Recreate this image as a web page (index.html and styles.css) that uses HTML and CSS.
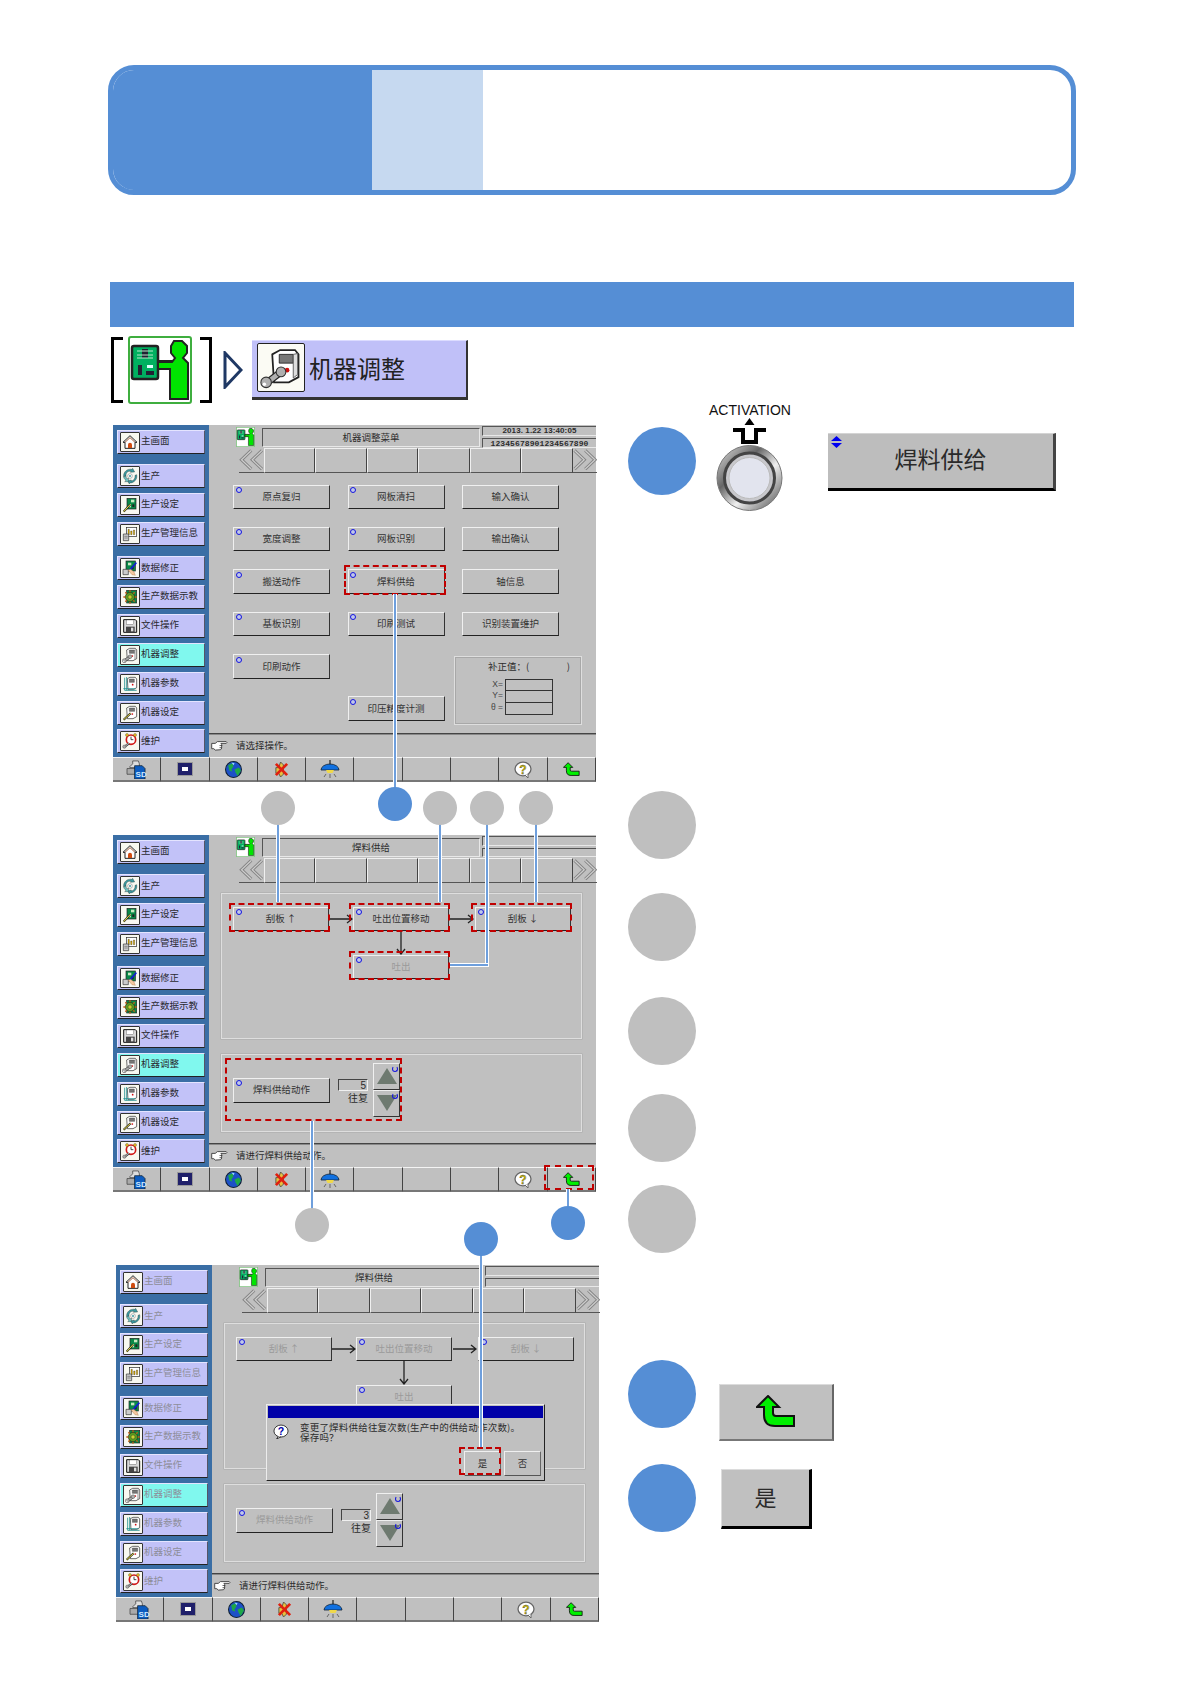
FILE: index.html
```html
<!DOCTYPE html>
<html lang="zh-CN">
<head>
<meta charset="utf-8">
<title>焊料供给</title>
<link rel="stylesheet" href="styles.css">
</head>
<body>
<svg class="defs" width="0" height="0" aria-hidden="true">
  <defs>
    <symbol id="i-person" viewBox="0 0 64 68">
      <rect x="1" y="1" width="62" height="66" rx="2" fill="#fff" stroke="#3fae3f" stroke-width="2"/>
      <rect x="4" y="10" width="26" height="33" rx="2" fill="#00b060" stroke="#222" stroke-width="2.500"/>
      <rect x="14" y="13" width="6" height="9" fill="#223"/><path d="M9 15h16M9 19h16M9 22h16" stroke="#b8e8c8" stroke-width="1"/>
      <rect x="10" y="29" width="4" height="10" fill="#223"/><rect x="19" y="29" width="6" height="3" fill="#dff"/><rect x="18" y="35" width="8" height="4" fill="#223"/>
      <path d="M30 25h17v7H30z" fill="#00e400" stroke="#222" stroke-width="2"/>
      <path d="M46 5h8l5 5v7l-4 5 5 5v36H42V33H30v-7h14l3-4-4-5v-7z" fill="#00e400" stroke="#222" stroke-width="2"/>
    </symbol>
    <symbol id="i-machine" viewBox="0 0 48 48">
      <path d="M14 9l9-5h17l4 5v26l-11 6H16z" fill="#fff" stroke="#222" stroke-width="2"/>
      <path d="M22 9h16v10H22z" fill="#777" stroke="#222"/>
      <path d="M38 9l5-1v24l-5 4z" fill="#ddd" stroke="#555"/>
      <circle cx="31" cy="27" r="2.600" fill="#d01010"/>
      <path d="M6 43l18-14" stroke="#222" stroke-width="8"/>
      <path d="M6 43l18-14" stroke="#b0b0b0" stroke-width="5.500"/>
      <circle cx="7" cy="41" r="6" fill="#b0b0b0" stroke="#333" stroke-width="1.200"/>
      <circle cx="24" cy="29" r="5.500" fill="#b0b0b0" stroke="#333" stroke-width="1.200"/>
      <circle cx="5" cy="43" r="2" fill="#fff"/>
    </symbol>
    <symbol id="i-home" viewBox="0 0 48 48">
      <path d="M24 5L45 25h-6v18H9V25H3z" fill="#fff" stroke="#222" stroke-width="3"/>
      <path d="M9 25L24 11l15 14" fill="none" stroke="#a06040" stroke-width="3"/>
      <path d="M18 42V32a6 6 0 0 1 12 0v10z" fill="#d04c10"/>
    </symbol>
    <symbol id="i-prod" viewBox="0 0 48 48">
      <path d="M5 26C3 12 16 1 30 4l2-3 6 11-13 1 2-3C18 8 11 14 12 24z" fill="#3a9aa0" stroke="#222"/>
      <path d="M44 20c3 13-7 25-21 25l-1 3-6-10 12-2-1 3c8 0 13-7 12-17z" fill="#3a9aa0" stroke="#222"/>
      <path d="M12 37C7 33 5 30 5 26l7-2c0 4 2 7 4 9l3-3 1 11H8z" fill="#6cc0c0" stroke="#222"/>
      <circle cx="24" cy="24" r="7" fill="#fff" stroke="#333"/>
      <circle cx="24" cy="24" r="3" fill="#3a9aa0"/>
    </symbol>
    <symbol id="i-setup" viewBox="0 0 48 48">
      <rect x="15" y="4" width="27" height="32" fill="#0a8a48" stroke="#222" stroke-width="2"/>
      <rect x="27" y="8" width="10" height="8" fill="#c8e8c0"/><rect x="21" y="21" width="6" height="10" fill="#c8e8c0"/><rect x="31" y="22" width="6" height="8" fill="#222"/>
      <path d="M5 44l20-22" stroke="#222" stroke-width="6"/>
      <path d="M5 44l20-22" stroke="#f0e040" stroke-width="3"/>
    </symbol>
    <symbol id="i-info" viewBox="0 0 48 48">
      <rect x="13" y="4" width="31" height="27" fill="#fff" stroke="#222" stroke-width="2"/>
      <path d="M18 26V10h4v16zM26 26V15h4v11zM34 26V12h4v14z" fill="#e0b000" stroke="#222"/>
      <path d="M4 24h16v20H4z" fill="#ccc" stroke="#333" stroke-width="2"/>
      <path d="M7 31h10M7 36h10" stroke="#666" stroke-width="2"/>
    </symbol>
    <symbol id="i-edit" viewBox="0 0 48 48">
      <rect x="12" y="3" width="28" height="30" fill="#0a8a48" stroke="#222" stroke-width="2"/>
      <rect x="18" y="8" width="10" height="8" fill="#c8e8c0"/><rect x="28" y="20" width="7" height="8" fill="#222"/>
      <path d="M3 28h16v16H3z" fill="#ccc" stroke="#333" stroke-width="2"/>
      <path d="M22 32L43 8" stroke="#1020d0" stroke-width="5"/>
      <path d="M18 30l12 14 10 2-4-10-10-8z" fill="#f4c8a0" stroke="#a06030"/>
    </symbol>
    <symbol id="i-teach" viewBox="0 0 48 48">
      <rect x="14" y="4" width="30" height="38" fill="#0a8a48" stroke="#222" stroke-width="2"/>
      <circle cx="24" cy="24" r="14" fill="#5a9a20" stroke="#222" stroke-width="2"/>
      <circle cx="24" cy="24" r="6" fill="#c8d030" stroke="#222"/>
      <path d="M24 4v6M24 38v6M4 24h6M38 24h6M10 10l4 4M34 34l4 4M10 38l4-4M34 14l4-4" stroke="#c06010" stroke-width="4"/>
    </symbol>
    <symbol id="i-floppy" viewBox="0 0 48 48">
      <path d="M5 5h35l4 4v34H5z" fill="#d8d8d8" stroke="#111" stroke-width="3"/>
      <rect x="13" y="6" width="22" height="13" fill="#fff" stroke="#333"/>
      <rect x="12" y="26" width="26" height="17" fill="#444"/>
      <rect x="27" y="29" width="7" height="11" fill="#ddd"/>
    </symbol>
    <symbol id="i-param" viewBox="0 0 48 48">
      <path d="M16 8l8-4h16l4 5v26l-10 6H18z" fill="#fff" stroke="#222" stroke-width="2"/>
      <path d="M22 9h15v10H22z" fill="#777" stroke="#222"/>
      <circle cx="32" cy="26" r="2.600" fill="#d01010"/>
      <path d="M8 5v38h36M4 38h36M14 3v40" fill="none" stroke="#209090" stroke-width="2.500"/>
    </symbol>
    <symbol id="i-mset" viewBox="0 0 48 48">
      <path d="M14 9l9-5h17l4 5v26l-11 6H16z" fill="#fff" stroke="#222" stroke-width="2"/>
      <path d="M22 9h16v10H22z" fill="#777" stroke="#222"/>
      <circle cx="31" cy="27" r="2.600" fill="#d01010"/>
      <path d="M5 44l21-19" stroke="#222" stroke-width="6"/>
      <path d="M5 44l21-19" stroke="#f0e040" stroke-width="3"/>
    </symbol>
    <symbol id="i-maint" viewBox="0 0 48 48">
      <circle cx="27" cy="20" r="14" fill="#fff" stroke="#d01818" stroke-width="5"/>
      <path d="M27 11v9h7" fill="none" stroke="#222" stroke-width="2.500"/>
      <circle cx="15" cy="6" r="4.500" fill="#f0c020" stroke="#222"/><circle cx="39" cy="6" r="4.500" fill="#f0c020" stroke="#222"/>
      <path d="M5 43l16-12" stroke="#222" stroke-width="6"/>
      <path d="M5 43l16-12" stroke="#aaa" stroke-width="3.500"/>
      <circle cx="7" cy="41" r="5" fill="#aaa" stroke="#333"/>
    </symbol>
    <symbol id="t-sd" viewBox="0 0 22 20">
      <path d="M4 7l3-3V1h6l1 3v4H4z" fill="#ddd" stroke="#444" stroke-width=".8"/>
      <path d="M1 9h12v6H1z" fill="#aaa" stroke="#444" stroke-width=".8"/>
      <path d="M9 6h8l3 3v11H9z" fill="#0c5cc0" stroke="#123" stroke-width=".8"/>
      <text x="10" y="18" font-family="Liberation Sans, sans-serif" font-size="8.500" font-weight="700" fill="#cfe8ff">SD</text>
    </symbol>
    <symbol id="t-mon" viewBox="0 0 16 14">
      <rect x=".5" y=".5" width="15" height="13" fill="#20206a" stroke="#999"/>
      <rect x="5" y="5" width="6" height="4" fill="#fff"/>
    </symbol>
    <symbol id="t-globe" viewBox="0 0 16 16">
      <circle cx="8" cy="8" r="7.500" fill="#1c50c8" stroke="#123"/>
      <path d="M3 4l4-2 1 3-2 3 1 2-3-1zM9 8l4-2 2 3-3 5-2-3z" fill="#1ea848"/>
      <path d="M6 1.500l3 .5-1 2z" fill="#9cd8ff"/>
    </symbol>
    <symbol id="t-x" viewBox="0 0 16 18">
      <path d="M7 1l3 3v10l-3 3-2-4H2V7h3z" fill="#e8c040" stroke="#554"/>
      <path d="M2 3l12 12M14 3L2 15" stroke="#e02010" stroke-width="3"/>
    </symbol>
    <symbol id="t-lamp" viewBox="0 0 20 18">
      <path d="M10 0v5" stroke="#222" stroke-width="1.200"/>
      <path d="M1 10a9 6 0 0 1 18 0z" fill="#1070e0" stroke="#123" stroke-width=".8"/>
      <path d="M6 10h8l-1.500 3h-5z" fill="#f0d848"/>
      <path d="M6 14l-2 3M10 14v4M14 14l2 3" stroke="#666"/>
    </symbol>
    <symbol id="t-help" viewBox="0 0 18 17">
      <ellipse cx="9" cy="8" rx="8" ry="6.800" fill="#fff" stroke="#666" stroke-width="1.300"/>
      <path d="M11 14l3 3v-4" fill="#fff" stroke="#666"/>
      <text x="9" y="12.500" text-anchor="middle" font-family="Liberation Sans, sans-serif" font-size="12" font-weight="700" fill="#c8b800" stroke="#444" stroke-width=".3">?</text>
    </symbol>
    <symbol id="t-qblue" viewBox="0 0 18 17">
      <ellipse cx="9" cy="8" rx="8" ry="6.800" fill="#fff" stroke="#222"/>
      <path d="M6 14l-2 3 5-2.500" fill="#fff" stroke="#222"/>
      <text x="9" y="12.500" text-anchor="middle" font-family="Liberation Sans, sans-serif" font-size="12" font-weight="700" fill="#0000a8">?</text>
    </symbol>
    <symbol id="t-back" viewBox="0 0 40 34">
      <path d="M12 1l11 11h-6v6q0 3 3 3h18v10H19q-11 0-11-11v-8H1z" fill="#00f000" stroke="#111" stroke-width="2"/>
    </symbol>
    <symbol id="i-hand" viewBox="0 0 24 14">
      <path d="M1 4h5l3-2.500h12.500q2 1 0 2.500H14l1 1.500v5q0 2-2 2.500l-7 .5-2-2H1z" fill="#fff" stroke="#333" stroke-width="1.200"/>
      <path d="M12 7h4M12 10h3" stroke="#333"/>
    </symbol>
    <symbol id="i-chevl" viewBox="0 0 24 22">
      <path d="M12 1.500L2 11l10 9.500M23 1.500L13 11l10 9.500" fill="none" stroke="#858585" stroke-width="3.200"/>
      <path d="M12 1.500L2 11l10 9.500M23 1.500L13 11l10 9.500" fill="none" stroke="#cdcdcd" stroke-width="1.200"/>
    </symbol>
    <symbol id="i-chevr" viewBox="0 0 24 22">
      <path d="M1 1.500L11 11 1 20.500M12 1.500L22 11 12 20.500" fill="none" stroke="#858585" stroke-width="3.200"/>
      <path d="M1 1.500L11 11 1 20.500M12 1.500L22 11 12 20.500" fill="none" stroke="#cdcdcd" stroke-width="1.200"/>
    </symbol>
    <symbol id="i-arr" viewBox="0 0 24 10">
      <path d="M0 5h23M18 1l5 4-5 4" fill="none" stroke="#222" stroke-width="1.300"/>
    </symbol>
    <symbol id="i-arrd" viewBox="0 0 10 24">
      <path d="M5 0v23M1 18l4 5 4-5" fill="none" stroke="#222" stroke-width="1.300"/>
    </symbol>
    <linearGradient id="metal" x1="0" y1="0" x2="1" y2="1">
      <stop offset="0" stop-color="#e4e4e4"/><stop offset=".35" stop-color="#666"/><stop offset=".6" stop-color="#f0f0f0"/><stop offset="1" stop-color="#444"/>
    </linearGradient>
  </defs>
</svg>

<div class="page">
  <header class="hero">
    <div class="hero-a"></div>
    <div class="hero-b"></div>
  </header>
  <div class="section-bar"></div>

  <div class="crumbs">
    <span class="brk brk-l"></span>
    <svg class="crumb-person"><use href="#i-person"/></svg>
    <span class="brk brk-r"></span>
    <svg class="crumb-tri" viewBox="0 0 20 38"><path d="M2 2l16 17L2 36z" fill="#fff" stroke="#1f3864" stroke-width="3"/></svg>
    <div class="crumb-btn">
      <span class="crumb-ico"><svg><use href="#i-machine"/></svg></span>
      <span>机器调整</span>
    </div>
  </div>

  <div class="work">
    <div class="screens">

      <section class="screen">
        <nav class="side">
          <div class="sb"><span class="ib"><svg><use href="#i-home"/></svg></span>主画面</div>
          <div class="sb g1"><span class="ib"><svg><use href="#i-prod"/></svg></span>生产</div>
          <div class="sb"><span class="ib"><svg><use href="#i-setup"/></svg></span>生产设定</div>
          <div class="sb"><span class="ib"><svg><use href="#i-info"/></svg></span>生产管理信息</div>
          <div class="sb g1"><span class="ib"><svg><use href="#i-edit"/></svg></span>数据修正</div>
          <div class="sb"><span class="ib"><svg><use href="#i-teach"/></svg></span>生产数据示教</div>
          <div class="sb"><span class="ib"><svg><use href="#i-floppy"/></svg></span>文件操作</div>
          <div class="sb on"><span class="ib"><svg><use href="#i-machine"/></svg></span>机器调整</div>
          <div class="sb"><span class="ib"><svg><use href="#i-param"/></svg></span>机器参数</div>
          <div class="sb"><span class="ib"><svg><use href="#i-mset"/></svg></span>机器设定</div>
          <div class="sb"><span class="ib"><svg><use href="#i-maint"/></svg></span>维护</div>
        </nav>
        <div class="main">
          <div class="head">
            <svg class="head-ico"><use href="#i-person"/></svg>
            <div class="head-title">机器调整菜单</div>
            <div class="head-info">
              <div class="info-box">2013. 1.22 13:40:05</div>
              <div class="info-box info-num">12345678901234567890</div>
            </div>
          </div>
          <div class="navrow">
            <span class="chev"><svg><use href="#i-chevl"/></svg></span>
            <span class="nc"></span><span class="nc"></span><span class="nc"></span><span class="nc"></span><span class="nc"></span><span class="nc"></span>
            <span class="chev"><svg><use href="#i-chevr"/></svg></span>
          </div>
          <div class="menu">
            <div class="btn mk">原点复归</div>
            <div class="btn mk">网板清扫</div>
            <div class="btn">输入确认</div>
            <div class="btn mk">宽度调整</div>
            <div class="btn mk">网板识别</div>
            <div class="btn">输出确认</div>
            <div class="btn mk">搬送动作</div>
            <div class="btn mk red">焊料供给</div>
            <div class="btn">轴信息</div>
            <div class="btn mk">基板识别</div>
            <div class="btn mk">印刷测试</div>
            <div class="btn">识别装置维护</div>
            <div class="btn mk">印刷动作</div>
            <div class="spacer"></div>
            <div class="offset">
              <div class="offset-title"><span>补正值：(</span><span>)</span></div>
              <div class="offset-grid">
                <span class="ol">X=</span><span class="ov"></span>
                <span class="ol">Y=</span><span class="ov"></span>
                <span class="ol">θ =</span><span class="ov"></span>
              </div>
            </div>
            <div class="spacer"></div>
            <div class="btn mk">印压精度计测</div>
          </div>
          <div class="status"><svg class="hand"><use href="#i-hand"/></svg>请选择操作。</div>
        </div>
        <div class="tools">
          <span class="tc"><svg class="t-sd"><use href="#t-sd"/></svg></span>
          <span class="tc"><svg class="t-mon"><use href="#t-mon"/></svg></span>
          <span class="tc"><svg class="t-globe"><use href="#t-globe"/></svg></span>
          <span class="tc"><svg class="t-x"><use href="#t-x"/></svg></span>
          <span class="tc"><svg class="t-lamp"><use href="#t-lamp"/></svg></span>
          <span class="tc"></span><span class="tc"></span><span class="tc"></span>
          <span class="tc"><svg class="t-help"><use href="#t-help"/></svg></span>
          <span class="tc"><svg class="t-back"><use href="#t-back"/></svg></span>
        </div>
      </section>

      <section class="screen screen-2">
        <nav class="side">
          <div class="sb"><span class="ib"><svg><use href="#i-home"/></svg></span>主画面</div>
          <div class="sb g1"><span class="ib"><svg><use href="#i-prod"/></svg></span>生产</div>
          <div class="sb"><span class="ib"><svg><use href="#i-setup"/></svg></span>生产设定</div>
          <div class="sb"><span class="ib"><svg><use href="#i-info"/></svg></span>生产管理信息</div>
          <div class="sb g1"><span class="ib"><svg><use href="#i-edit"/></svg></span>数据修正</div>
          <div class="sb"><span class="ib"><svg><use href="#i-teach"/></svg></span>生产数据示教</div>
          <div class="sb"><span class="ib"><svg><use href="#i-floppy"/></svg></span>文件操作</div>
          <div class="sb on"><span class="ib"><svg><use href="#i-machine"/></svg></span>机器调整</div>
          <div class="sb"><span class="ib"><svg><use href="#i-param"/></svg></span>机器参数</div>
          <div class="sb"><span class="ib"><svg><use href="#i-mset"/></svg></span>机器设定</div>
          <div class="sb"><span class="ib"><svg><use href="#i-maint"/></svg></span>维护</div>
        </nav>
        <div class="main">
          <div class="head">
            <svg class="head-ico"><use href="#i-person"/></svg>
            <div class="head-title">焊料供给</div>
            <div class="head-info">
              <div class="info-box"></div>
              <div class="info-box"></div>
            </div>
          </div>
          <div class="navrow">
            <span class="chev"><svg><use href="#i-chevl"/></svg></span>
            <span class="nc"></span><span class="nc"></span><span class="nc"></span><span class="nc"></span><span class="nc"></span><span class="nc"></span>
            <span class="chev"><svg><use href="#i-chevr"/></svg></span>
          </div>
          <div class="panels">
            <div class="panel flow">
              <div class="btn mk red">刮板 ↑</div>
              <svg class="arr"><use href="#i-arr"/></svg>
              <div class="btn mk red">吐出位置移动</div>
              <svg class="arr"><use href="#i-arr"/></svg>
              <div class="btn mk red">刮板 ↓</div>
              <svg class="arrd"><use href="#i-arrd"/></svg>
              <div class="btn mk red off pos-out">吐出</div>
            </div>
            <div class="panel cycle">
              <div class="btn mk">焊料供给动作</div>
              <div class="counter"><div class="cnt-box">5</div><div class="cnt-label">往复</div></div>
              <div class="updown">
                <div class="ud mkr"><span class="up"></span></div>
                <div class="ud mkr"><span class="dn"></span></div>
              </div>
              <span class="cycle-mark"></span>
            </div>
          </div>
          <div class="status"><svg class="hand"><use href="#i-hand"/></svg>请进行焊料供给动作。</div>
        </div>
        <div class="tools">
          <span class="tc"><svg class="t-sd"><use href="#t-sd"/></svg></span>
          <span class="tc"><svg class="t-mon"><use href="#t-mon"/></svg></span>
          <span class="tc"><svg class="t-globe"><use href="#t-globe"/></svg></span>
          <span class="tc"><svg class="t-x"><use href="#t-x"/></svg></span>
          <span class="tc"><svg class="t-lamp"><use href="#t-lamp"/></svg></span>
          <span class="tc"></span><span class="tc"></span><span class="tc"></span>
          <span class="tc"><svg class="t-help"><use href="#t-help"/></svg></span>
          <span class="tc tc-red"><svg class="t-back"><use href="#t-back"/></svg></span>
        </div>
      </section>

      <section class="screen screen-3">
        <nav class="side dim">
          <div class="sb"><span class="ib"><svg><use href="#i-home"/></svg></span>主画面</div>
          <div class="sb g1"><span class="ib"><svg><use href="#i-prod"/></svg></span>生产</div>
          <div class="sb"><span class="ib"><svg><use href="#i-setup"/></svg></span>生产设定</div>
          <div class="sb"><span class="ib"><svg><use href="#i-info"/></svg></span>生产管理信息</div>
          <div class="sb g1"><span class="ib"><svg><use href="#i-edit"/></svg></span>数据修正</div>
          <div class="sb"><span class="ib"><svg><use href="#i-teach"/></svg></span>生产数据示教</div>
          <div class="sb"><span class="ib"><svg><use href="#i-floppy"/></svg></span>文件操作</div>
          <div class="sb on"><span class="ib"><svg><use href="#i-machine"/></svg></span>机器调整</div>
          <div class="sb"><span class="ib"><svg><use href="#i-param"/></svg></span>机器参数</div>
          <div class="sb"><span class="ib"><svg><use href="#i-mset"/></svg></span>机器设定</div>
          <div class="sb"><span class="ib"><svg><use href="#i-maint"/></svg></span>维护</div>
        </nav>
        <div class="main">
          <div class="head">
            <svg class="head-ico"><use href="#i-person"/></svg>
            <div class="head-title">焊料供给</div>
            <div class="head-info">
              <div class="info-box"></div>
              <div class="info-box"></div>
            </div>
          </div>
          <div class="navrow">
            <span class="chev"><svg><use href="#i-chevl"/></svg></span>
            <span class="nc"></span><span class="nc"></span><span class="nc"></span><span class="nc"></span><span class="nc"></span><span class="nc"></span>
            <span class="chev"><svg><use href="#i-chevr"/></svg></span>
          </div>
          <div class="panels">
            <div class="panel flow">
              <div class="btn mk off">刮板 ↑</div>
              <svg class="arr"><use href="#i-arr"/></svg>
              <div class="btn mk off">吐出位置移动</div>
              <svg class="arr"><use href="#i-arr"/></svg>
              <div class="btn mk off">刮板 ↓</div>
              <svg class="arrd"><use href="#i-arrd"/></svg>
              <div class="btn mk off pos-out">吐出</div>
            </div>
            <div class="panel cycle">
              <div class="btn mk off">焊料供给动作</div>
              <div class="counter"><div class="cnt-box">3</div><div class="cnt-label">往复</div></div>
              <div class="updown">
                <div class="ud mkr"><span class="up"></span></div>
                <div class="ud mkr"><span class="dn"></span></div>
              </div>
            </div>
          </div>
          <div class="dialog">
            <div class="dlg-bar"></div>
            <div class="dlg-body">
              <svg class="dlg-q"><use href="#t-qblue"/></svg>
              <p class="dlg-text">变更了焊料供给往复次数(生产中的供给动作次数)。<br>保存吗？</p>
            </div>
            <div class="dlg-btns">
              <div class="btn dlg-yes">是</div>
              <div class="btn">否</div>
            </div>
          </div>
          <div class="status"><svg class="hand"><use href="#i-hand"/></svg>请进行焊料供给动作。</div>
        </div>
        <div class="tools">
          <span class="tc"><svg class="t-sd"><use href="#t-sd"/></svg></span>
          <span class="tc"><svg class="t-mon"><use href="#t-mon"/></svg></span>
          <span class="tc"><svg class="t-globe"><use href="#t-globe"/></svg></span>
          <span class="tc"><svg class="t-x"><use href="#t-x"/></svg></span>
          <span class="tc"><svg class="t-lamp"><use href="#t-lamp"/></svg></span>
          <span class="tc"></span><span class="tc"></span><span class="tc"></span>
          <span class="tc"><svg class="t-help"><use href="#t-help"/></svg></span>
          <span class="tc"><svg class="t-back"><use href="#t-back"/></svg></span>
        </div>
      </section>
    </div>

    <div class="steps">
      <div class="step">
        <span class="big blue"></span>
        <div class="switch">
          <div class="switch-label">ACTIVATION</div>
          <svg class="switch-svg" viewBox="0 0 81 97">
            <path d="M35.500 9l5-7 5 7z" fill="#000"/>
            <path d="M24 14h10v12h13V14h10" fill="none" stroke="#000" stroke-width="4"/>
            <circle cx="40.500" cy="62" r="32.500" fill="url(#metal)" stroke="#777"/>
            <circle cx="40.500" cy="62" r="25" fill="#c8c8cc" stroke="#444" stroke-width="3"/>
            <circle cx="40.500" cy="62" r="20.500" fill="#e2e4ee" stroke="#bbb"/>
          </svg>
        </div>
        <div class="big-btn"><svg class="big-mark" viewBox="0 0 13 12"><path d="M6.500 0L12 5H1zM1 7h11L6.500 12z" fill="#0000f0"/></svg>焊料供给</div>
      </div>
      <div class="step st2"><span class="big gray"></span></div>
      <div class="step st3"><span class="big gray"></span></div>
      <div class="step st4"><span class="big gray"></span></div>
      <div class="step st5"><span class="big gray"></span></div>
      <div class="step st6"><span class="big gray"></span></div>
      <div class="step st7">
        <span class="big blue"></span>
        <div class="ret-btn"><svg><use href="#t-back"/></svg></div>
      </div>
      <div class="step st8">
        <span class="big blue"></span>
        <div class="yes-btn">是</div>
      </div>
    </div>
  </div>

  <div class="notes">
    <span class="lead l-blue1"></span>
    <span class="lead l-g1"></span>
    <span class="lead l-g2"></span>
    <span class="lead l-g3"></span>
    <span class="lead-h l-g3h"></span>
    <span class="lead l-g4"></span>
    <span class="lead l-gb"></span>
    <span class="lead l-ret"></span>
    <span class="lead l-yes"></span>
    <span class="dot blue d-b1"></span>
    <span class="dot gray d-g1"></span>
    <span class="dot gray d-g2"></span>
    <span class="dot gray d-g3"></span>
    <span class="dot gray d-g4"></span>
    <span class="dot gray d-gb"></span>
    <span class="dot blue d-ret"></span>
    <span class="dot blue d-yes"></span>
  </div>
</div>
</body>
</html>
```

FILE: styles.css
```css
* { box-sizing: border-box; }
html, body { margin: 0; padding: 0; background: #fff; }
body { font-family: "Noto Sans CJK SC", "Liberation Sans", sans-serif; color: #2c2c2c; }
.defs { position: absolute; }
svg { display: block; }

.page { position: relative; width: 1190px; height: 1684px; padding-top: 65px; overflow: hidden; }

/* Header card */
.hero { display: flex; width: 968px; height: 130px; margin-left: 108px; border: 5px solid #558ed5; border-radius: 26px; overflow: hidden; background: #fff; }
.hero-a { width: 259px; background: #558ed5; }
.hero-b { width: 111px; background: #c6d9f0; }
.section-bar { width: 964px; height: 45px; margin: 87px 0 0 110px; background: #558ed5; }

/* Breadcrumb */
.crumbs { display: flex; align-items: center; height: 68px; margin: 9px 0 0 111px; }
.brk { display: block; width: 12px; height: 66px; border: 3px solid #000; }
.brk-l { border-right: 0; }
.brk-r { border-left: 0; margin-left: 8px; }
.crumb-person { width: 64px; height: 68px; margin-left: 5px; }
.crumb-tri { width: 20px; height: 38px; margin-left: 11px; }
.crumb-btn { display: flex; align-items: center; gap: 4px; width: 216px; height: 60px; margin-left: 9px; padding: 0 0 3px 5px; background: #c0c0f8; border-top: 1px solid #dcdcff; border-right: 2px solid #333; border-bottom: 3px solid #333; font-size: 24px; line-height: 1; color: #222; }
.crumb-ico { display: block; width: 48px; height: 49px; padding: 2px; background: #fbfbf4; border: 1.5px solid #222; border-radius: 2px; }
.crumb-ico svg { width: 100%; height: 100%; }

/* Work area */
.work { display: flex; margin-top: 21px; padding-left: 113px; }
.screens { width: 486px; }

/* Machine screen */
.screen { display: grid; grid-template-columns: 96px 387px; grid-template-rows: 332px 25px; width: 483px; height: 357px; background: #c0c0c0; font-size: 9.5px; line-height: 1; }
.screen-2 { margin-top: 53px; }
.screen-3 { margin: 73px 0 0 3px; }

.side { display: flex; flex-direction: column; gap: 4.85px; padding: 5px 4.5px 0 4px; background: #3a6ea5; }
.sb { display: flex; align-items: center; gap: 1px; height: 24px; padding: 0 0 2px 2px; background: #c2c2f8; border-top: 1px solid #e4e4ff; border-left: 1px solid #e4e4ff; border-bottom: 1px solid #222; border-right: 1px solid #556; white-space: nowrap; color: #2a2a30; }
.sb.g1 { margin-top: 5.5px; }
.sb.on { background: #80f8ee; }
.ib { display: block; flex: none; width: 20px; height: 20px; margin-bottom: -2px; padding: 1px; background: #f8f8f0; border: 1px solid #333; border-radius: 1px; }
.ib svg { width: 100%; height: 100%; }
.dim .sb { color: #8d8d98; }

.main { position: relative; display: flex; flex-direction: column; min-width: 0; }
.head { display: flex; height: 23px; }
.head-ico { flex: none; width: 19px; height: 20px; margin: 2px 0 0 27px; }
.head-title { display: flex; align-items: center; justify-content: center; width: 218px; height: 19px; margin: 3px 0 0 7px; border-top: 1px solid #555; border-left: 1px solid #555; border-bottom: 1px solid #e8e8e8; border-right: 1px solid #e8e8e8; }
.head-info { display: flex; flex-direction: column; gap: 2px; width: 114px; margin-left: 2px; padding-top: 1px; }
.info-box { height: 9.500px; border-top: 1px solid #555; border-left: 1px solid #555; border-bottom: 1px solid #e8e8e8; font: 700 8px/8.500px "Liberation Sans", sans-serif; letter-spacing: .1px; text-align: center; }
.info-num { height: 10px; font: 700 8px/9px "Liberation Mono", monospace; }

.navrow { display: flex; height: 24.5px; margin-left: 30px; }
.chev { display: block; flex: none; width: 24.5px; padding: 1px 0; border-bottom: 1px solid #555; }
.chev svg { width: 100%; height: 100%; }
.nc { display: block; flex: none; width: 51.5px; border-top: 1px solid #f0f0f0; border-left: 1px solid #f0f0f0; border-right: 1px solid #444; border-bottom: 1px solid #555; }

.btn { position: relative; display: flex; align-items: center; justify-content: center; background: #c0c0c0; border-top: 1px solid #f0f0f0; border-left: 1px solid #f0f0f0; border-right: 1px solid #333; border-bottom: 1px solid #222; white-space: nowrap; color: #333; }
.btn.off { color: #9a9a9a; }
.mk::before, .mkr::before { content: ""; position: absolute; top: 1.500px; left: 1.500px; width: 4px; height: 4px; border: 1.200px solid #1414e0; border-radius: 50%; background: #c0c8e8; }
.mkr::before { left: auto; right: 1px; top: 2px; border-top-color: transparent; background: none; }
.red::after, .tc-red::after, .cycle-mark, .dlg-yes::after { content: ""; position: absolute; border: 2px dashed #c00000; border-radius: 1px; z-index: 2; }
.red::after { inset: -5px -2px -2px -5px; }

/* Menu page */
.menu { display: grid; flex: 1; grid-template-columns: repeat(3, 97px); grid-auto-rows: 24.500px; row-gap: 17.900px; column-gap: 17.500px; padding: 12px 0 0 24px; }
.offset { grid-column: 3; grid-row: 5 / 7; margin: 2px -23px 0 -8px; height: 69px; padding: 5px 0 0; border: 1px solid #dedede; box-shadow: inset 0 0 0 1px #a8a8a8; }
.offset-title { display: flex; justify-content: space-between; padding: 0 11px 0 33px; }
.offset-grid { display: grid; grid-template-columns: 48px 48px; grid-auto-rows: 11.700px; column-gap: 2px; margin-top: 7px; }
.ol { font: 8.500px/11.700px "Liberation Sans", sans-serif; text-align: right; color: #444; }
.ov { border: 1px solid #333; background: #c0c0c0; margin-bottom: -1px; }

.status { display: flex; align-items: center; height: 24px; margin-top: auto; padding-left: 2px; border-top: 1px solid #444; box-shadow: inset 0 1px 0 #888; }
.hand { width: 17px; height: 11px; margin-right: 8px; }

/* Toolbar */
.tools { display: grid; grid-column: 1 / 3; grid-template-columns: repeat(10, 1fr); position: relative; }
.tc { position: relative; display: flex; align-items: center; justify-content: center; border-top: 1px solid #f4f4f4; border-right: 1px solid #444; border-bottom: 2px solid #777; }
.tc-red::after { inset: -3px 1px 0 -4px; }
.t-sd { width: 21px; height: 19px; }
.t-mon { width: 16px; height: 14px; }
.t-globe { width: 17px; height: 17px; }
.t-x { width: 15px; height: 17px; }
.t-lamp { width: 20px; height: 18px; }
.t-help { width: 18px; height: 17px; }
.t-back { width: 17px; height: 15px; }

/* Panels in the feed pages */
.panels { display: flex; flex-direction: column; gap: 15px; margin: 10px 0 0 12px; width: 361px; }
.panel { border: 1px solid #dedede; box-shadow: 0 0 0 .5px #a8a8a8; }
.flow { display: grid; grid-template-columns: 96px 24px 96px 26px 96px; grid-template-rows: 24px 24px 24px; height: 146px; padding: 13px 0 0 11px; align-items: center; justify-items: center; }
.flow .btn { width: 100%; height: 100%; }
.arr { width: 24px; height: 10px; }
.arrd { grid-column: 3; grid-row: 2; width: 10px; height: 24px; }
.flow .pos-out { grid-column: 3; grid-row: 3; }
.cycle { position: relative; display: flex; height: 78px; padding: 8px 0 0 11px; }
.cycle > .btn { flex: none; width: 97px; height: 25px; margin-top: 15px; }
.counter { width: 30px; margin: 16px 0 0 8px; text-align: right; }
.cnt-box { height: 12px; padding-right: 1px; border-top: 1px solid #444; border-left: 1px solid #444; border-bottom: 1px solid #f0f0f0; border-right: 1px solid #f0f0f0; font: 10px/11px "Liberation Sans", sans-serif; }
.cnt-label { margin-top: 2px; font-size: 10px; }
.updown { flex: none; width: 27px; margin: 0 0 0 5px; }
.ud { position: relative; display: flex; align-items: center; justify-content: center; height: 27px; border-top: 1px solid #f0f0f0; border-left: 1px solid #f0f0f0; border-right: 1px solid #333; border-bottom: 1px solid #333; }
.up, .dn { display: block; width: 0; height: 0; border-left: 10px solid transparent; border-right: 10px solid transparent; }
.up { border-bottom: 16px solid #6e7a70; }
.dn { border-top: 16px solid #6e7a70; }
.cycle-mark { top: 3px; left: 3px; width: 177px; height: 63px; }

/* Dialog */
.dialog { position: absolute; z-index: 3; top: 139px; left: 54px; display: flex; flex-direction: column; width: 279px; height: 77px; padding: 1px; background: #c0c0c0; border-top: 1px solid #ececec; border-left: 1px solid #ececec; border-right: 1px solid #222; border-bottom: 1px solid #222; }
.dlg-bar { height: 12px; background: #0000a8; }
.dlg-body { display: flex; height: 30px; }
.dlg-q { flex: none; width: 16px; height: 15px; margin: 6px 0 0 5px; }
.dlg-text { margin: 4px 0 0 11px; font-size: 9.500px; line-height: 10px; letter-spacing: .2px; white-space: nowrap; color: #2c2c2c; }
.dlg-btns { display: flex; justify-content: flex-end; gap: 3px; padding: 3px 2px 0 0; }
.dlg-btns .btn { width: 37px; height: 25px; border-right-color: #666; border-bottom-color: #555; }
.dlg-yes::after { inset: -5px -1px 0 -6px; }

/* Right column */
.steps { display: flex; flex-direction: column; margin: 2px 0 0 29px; }
.step { display: flex; align-items: flex-start; height: 68px; }
.st2 { margin-top: 296px; }
.st3 { margin-top: 34px; }
.st4 { margin-top: 36px; }
.st5 { margin-top: 29px; }
.st6 { margin-top: 23px; }
.st7 { margin-top: 107px; }
.st8 { margin-top: 36px; }
.big { display: block; flex: none; width: 68px; height: 68px; border-radius: 50%; }
.blue { background: #558ed5; }
.gray { background: #bfbfbf; }
.switch { flex: none; width: 81px; margin: -25px 0 0 13px; }
.switch-label { font: 14px/16px "Liberation Sans", sans-serif; color: #111; text-align: center; white-space: nowrap; }
.switch-svg { width: 81px; height: 97px; margin-top: -2px; }
.big-btn { position: relative; display: flex; align-items: center; justify-content: center; flex: none; width: 228px; height: 58px; margin: 6px 0 0 38px; padding-bottom: 6px; background: #bdbdbd; border-top: 1px solid #d4d4d4; border-right: 3px solid #444; border-bottom: 3px solid #000; font-size: 23px; line-height: 1; color: #2a2a2a; }
.big-mark { position: absolute; top: 2px; left: 2px; width: 13px; height: 12px; }
.ret-btn { display: flex; align-items: center; justify-content: center; flex: none; width: 115px; height: 57px; margin: 24px 0 0 23px; background: #c0c0c0; border-top: 1px solid #dcdcdc; border-left: 1px solid #dcdcdc; border-right: 2px solid #666; border-bottom: 2px solid #777; }
.ret-btn svg { width: 40px; height: 34px; }
.yes-btn { display: flex; align-items: center; justify-content: center; flex: none; width: 91px; height: 60px; margin: 5px 0 0 25px; padding-bottom: 4px; background: #c0c0c0; border-top: 1px solid #dcdcdc; border-left: 1px solid #dcdcdc; border-right: 3px solid #000; border-bottom: 3px solid #000; font-size: 22px; line-height: 1; color: #2a2a2a; }

/* Callout leader lines and numbered dots over the screens */
.notes { position: absolute; inset: 0; z-index: 5; pointer-events: none; }
.lead { position: absolute; width: 4px; border-left: 1px solid #fff; border-right: 1px solid #fff; background: #6f9fdc; }
.lead-h { position: absolute; height: 4px; border-top: 1px solid #fff; border-bottom: 1px solid #fff; background: #6f9fdc; }
.dot { position: absolute; width: 34px; height: 34px; border-radius: 50%; }
.l-blue1 { left: 393px; top: 594px; height: 194px; }
.l-g1 { left: 276px; top: 820px; height: 82px; }
.l-g2 { left: 437.500px; top: 820px; height: 82px; }
.l-g3 { left: 485px; top: 820px; height: 147px; }
.l-g3h { left: 450px; top: 963px; width: 38px; }
.l-g4 { left: 534px; top: 820px; height: 82px; }
.l-gb { left: 310px; top: 1121px; height: 90px; }
.l-ret { left: 566px; top: 1189px; height: 20px; }
.l-yes { left: 479px; top: 1254px; height: 193px; }
.d-b1 { left: 378px; top: 787px; }
.d-g1 { left: 261px; top: 791px; }
.d-g2 { left: 422.500px; top: 791px; }
.d-g3 { left: 470px; top: 791px; }
.d-g4 { left: 519px; top: 791px; }
.d-gb { left: 295px; top: 1208px; }
.d-ret { left: 551px; top: 1206px; }
.d-yes { left: 464px; top: 1222px; }
```
